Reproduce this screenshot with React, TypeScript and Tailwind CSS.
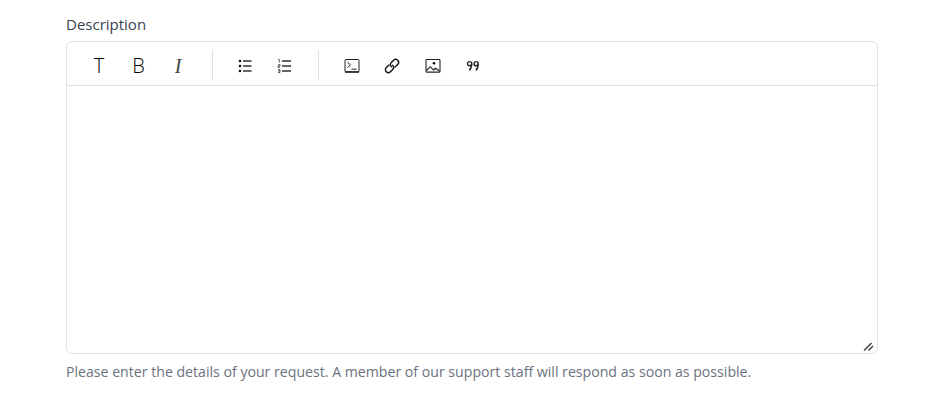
export default function App() {
  const Btn = ({ children }: { children: React.ReactNode }) => (
    <button type="button" className="w-10 h-6 pt-[2px] flex items-center justify-center text-black">{children}</button>
  );
  return (
    <div className="w-[950px] h-[417px] bg-white px-[66px] pt-[14px] font-['Open_Sans','Noto_Sans',sans-serif]">
      <label className="block text-[15px] leading-5 text-[#374151]">Description</label>
      <div className="relative mt-[7px] w-[812px] rounded-md border border-[#e0e0e0] overflow-hidden">
        <div className="h-[44px] pt-[2px] flex items-center border-b border-[#e0e0e0]">
          <div className="flex items-center pl-3 pr-[13px] h-[30px] border-r border-[#e0e0e0]">
            <Btn><span className="font-light text-[20px] leading-none">T</span></Btn>
            <Btn><span className="font-light text-[20px] leading-none pr-[1px]">B</span></Btn>
            <Btn><span className="font-['Liberation_Serif'] italic text-[20px] leading-none pr-[2px] text-[#444444]">I</span></Btn>
          </div>
          <div className="flex items-center pl-[12px] pr-[13px] h-[30px] border-r border-[#e0e0e0]">
            <Btn>
              <svg className="ml-[2px]" width="16" height="16" viewBox="0 0 16 16" fill="none" stroke="#333" strokeWidth="1.5">
                <path d="M5 3h8.500M5 8h8.500M5 13h8.500" />
                <circle cx="2" cy="3" r="1.300" fill="#111" stroke="none" />
                <circle cx="2" cy="8" r="1.300" fill="#111" stroke="none" />
                <circle cx="2" cy="13" r="1.300" fill="#111" stroke="none" />
              </svg>
            </Btn>
            <Btn>
              <svg width="16" height="16" viewBox="0 0 16 16" fill="none" stroke="#333" strokeWidth="1.5">
                <path d="M5 3h9M5 8h9M5 13h9" />
                <path d="M1.200 1.500h1.100v3M1 6.700h2v1.300H1v1.300h2M1 11.700h2v2.800H1M1 13h2" strokeWidth="0.800" />
              </svg>
            </Btn>
          </div>
          <div className="flex items-center pl-[13px]">
            <Btn>
              <svg width="16" height="14" viewBox="0 0 16 14" fill="none" stroke="#222" strokeWidth="1">
                <rect x="1" y="0.500" width="14" height="12.400" rx="0.800" />
                <path d="M1 13h14" strokeWidth="1.500" />
                <path d="M3.500 3.200l3 2.600-3 2.600M7.500 10.200h5" />
              </svg>
            </Btn>
            <Btn>
              <svg width="18" height="18" viewBox="0 0 16 16" fill="none" stroke="#111" strokeWidth="1.250" strokeLinecap="round" strokeLinejoin="round">
                <g transform="rotate(-45 8 8)">
                  <path d="M6.800 5.400H3.400a2.600 2.600 0 0 0 0 5.200H6.300a2.600 2.600 0 0 0 2.600-2.600" />
                  <path d="M9.200 10.600h3.400a2.600 2.600 0 0 0 0-5.200H9.700a2.600 2.600 0 0 0-2.600 2.600" />
                </g>
              </svg>
            </Btn>
            <Btn>
              <svg className="ml-[1px]" width="16" height="14" viewBox="0 0 16 14" fill="none" stroke="#222" strokeWidth="1.100">
                <rect x="1" y="0.500" width="14" height="12.600" rx="0.800" />
                <circle cx="9" cy="4.300" r="1.300" fill="#111" stroke="none" />
                <path d="M1.500 11.500l3.700-3.800 3.300 3.300 2-1.700 4 2.700" />
              </svg>
            </Btn>
            <Btn>
              <svg className="ml-[1px]" width="14" height="12" viewBox="0 0 14 12" fill="none" stroke="#222" strokeWidth="1.400">
                <circle cx="3.600" cy="3.700" r="2.100" />
                <path d="M5.700 3.700c0 3-.8 5.300-2.400 6.700" />
                <circle cx="10.100" cy="3.700" r="2.100" />
                <path d="M12.200 3.700c0 3-.8 5.300-2.400 6.700" />
              </svg>
            </Btn>
          </div>
        </div>
        <textarea className="block w-full h-[267px] resize-none outline-none bg-white" aria-label="Description" />
        <svg className="absolute right-[3px] bottom-[2px] pointer-events-none" width="11" height="9" viewBox="0 0 11 9" fill="none" stroke="#444" strokeWidth="1.500">
          <path d="M1 8.500L8.500 1M5.500 8.500L10 4" />
        </svg>
      </div>
      <p className="mt-[8px] text-[14.13px] leading-5 text-[#6b7280]">Please enter the details of your request. A member of our support staff will respond as soon as possible.</p>
    </div>
  );
}
